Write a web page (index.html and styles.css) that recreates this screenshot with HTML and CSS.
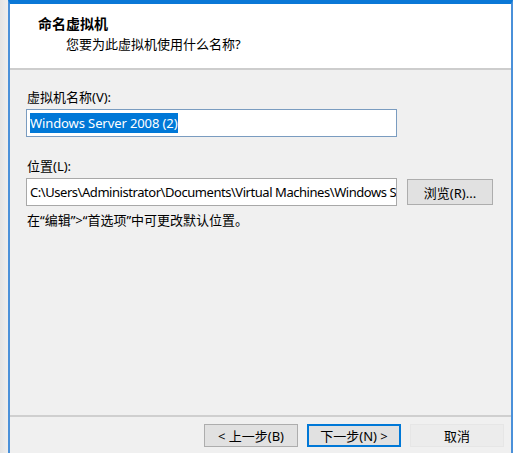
FILE: index.html
```html
<!DOCTYPE html>
<html>
<head lang="zh-CN">
    <meta charset="UTF-8">
    <title>新建虚拟机向导</title>
    <link rel="stylesheet" href="styles.css">
</head>
<body>
<div class="desk">
    <div class="edge"></div>
    <div class="wizard">
        <div class="head">
            <h4 class="title">命名虚拟机</h4>
            <p class="sub">您要为此虚拟机使用什么名称?</p>
        </div>
        <div class="main">
            <label class="label">虚拟机名称(V):</label>
            <div class="field"><span class="sel">Windows Server 2008 (2)</span></div>

            <label class="label label-loc">位置(L):</label>
            <div class="row">
                <div class="field field-path">C:\Users\Administrator\Documents\Virtual Machines\Windows Server 2008 (2)</div>
                <button class="btn btn-browse">浏览(R)...</button>
            </div>
            <p class="note">在“编辑”&gt;“首选项”中可更改默认位置。</p>
        </div>
        <div class="foot">
            <button class="btn">&lt; 上一步(B)</button>
            <button class="btn btn-default">下一步(N) &gt;</button>
            <button class="btn btn-cancel">取消</button>
        </div>
    </div>
</div>
</body>
</html>
```

FILE: styles.css
```css
*{
    margin: 0;
    padding: 0;
    box-sizing: border-box;
}
html,body{
    font-family: "Noto Sans", "Noto Sans CJK SC", sans-serif;
    font-size: 13px;
    color: #000;
    background: #e9e9e9;
}
.desk{
    display: flex;
    width: 513px;
    height: 453px;
    overflow: hidden;
}
.edge{
    width: 8px;
    background: linear-gradient(to right, #e4e4e4, #eeeeee);
}
.wizard{
    flex: 1;
    display: flex;
    flex-direction: column;
    background: #f0f0f0;
    border-left: 2px solid #4a90d9;
    border-right: 2px solid #4a90d9;
    border-top: 4px solid #0a78d7;
}
.head{
    height: 66px;
    background: #fff;
    border-bottom: 2px solid #cdcdcd;
    padding: 10px 0 0 28px;
}
.title{
    font-size: 14px;
    font-weight: bold;
    line-height: 20px;
}
.sub{
    padding-left: 28px;
    line-height: 20px;
}
.main{
    flex: 1;
    padding: 18px 0 0 16px;
}
.label{
    display: block;
    line-height: 18px;
    padding-left: 1px;
}
.label-loc{
    margin-top: 20px;
}
.field{
    width: 371px;
    height: 28px;
    margin-top: 3px;
    background: #fff;
    border: 1px solid #7a9cc0;
    padding: 3px 3px 0;
    line-height: 20px;
    white-space: nowrap;
    overflow: hidden;
}
.field-path{
    border-color: #a8a8a8;
    letter-spacing: -0.45px;
}
.sel{
    background: #0078d7;
    color: #fff;
    padding: 1px 0;
    letter-spacing: -0.1px;
}
.row{
    display: flex;
    align-items: flex-start;
    gap: 10px;
}
.btn{
    font-family: inherit;
    font-size: 13px;
    height: 23px;
    width: 94px;
    background: #e1e1e1;
    border: 1px solid #adadad;
    color: #000;
}
.btn-browse{
    width: 86px;
    height: 26px;
    margin-top: 4px;
}
.note{
    margin-top: 5px;
    line-height: 18px;
    padding-left: 1px;
}
.foot{
    height: 38px;
    border-top: 2px solid #cfcfcf;
    display: flex;
    justify-content: flex-end;
    align-items: center;
    gap: 9px;
    padding: 0 7px 0 0;
}
.btn-default{
    border: 2px solid #0078d7;
}
.btn-cancel{
    background: #ececec;
    border-color: #e6e6e6;
}
```
